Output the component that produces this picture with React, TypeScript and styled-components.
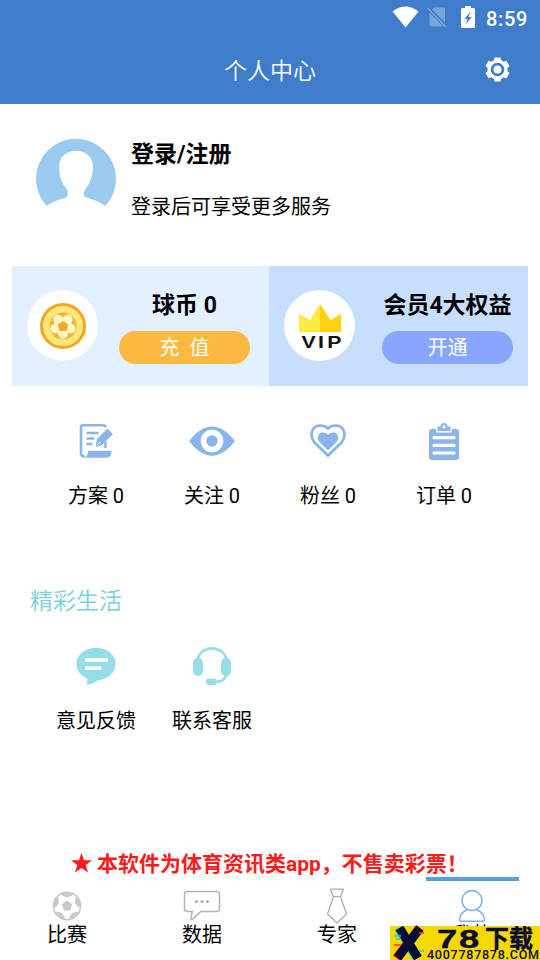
import React from 'react';
import styled, { createGlobalStyle } from 'styled-components';

const GlobalStyle = createGlobalStyle`
  * { box-sizing: border-box; }
  body { margin: 0; background: #fff; }
`;

const Screen = styled.div`
  width: 540px;
  height: 960px;
  overflow: hidden;
  display: flex;
  flex-direction: column;
  background: #fff;
  color: #000;
  font-family: Roboto, "Noto Sans CJK SC", sans-serif;
  font-size: 20px;
`;

const Header = styled.header`
  flex: none;
  height: 104px;
  background: #3f7dcb;
  color: #fff;
`;

const StatusBar = styled.div`
  height: 36px;
  padding-right: 12px;
  display: flex;
  align-items: center;
  justify-content: flex-end;
  gap: 8px;
  svg { display: block; margin-bottom: 2px; }
`;

const Clock = styled.span`
  width: 42px;
  margin-left: 3px;
  font-size: 20px;
  font-weight: 500;
  line-height: 36px;
  letter-spacing: 0.7px;
  white-space: nowrap;
  padding-top: 1px;
`;

const TitleBar = styled.div`
  height: 68px;
  padding: 0 30px;
  display: grid;
  grid-template-columns: 26px 1fr 26px;
  align-items: center;
`;

const Title = styled.h1`
  margin: 0;
  grid-column: 2;
  text-align: center;
  font-size: 23px;
  font-weight: 350;
  line-height: 30px;
  padding-top: 4px;
`;

const Profile = styled.section`
  flex: none;
  height: 162px;
  padding: 35px 36px 0;
  display: flex;
  gap: 15px;
`;

const ProfileText = styled.div`
  padding-top: 1px;
  display: flex;
  flex-direction: column;
  gap: 22px;
`;

const ProfileName = styled.div`
  font-size: 23px;
  font-weight: 700;
  line-height: 30px;
`;

const ProfileHint = styled.div`
  line-height: 30px;
`;

const Cards = styled.section`
  flex: none;
  height: 120px;
  margin: 0 12px;
  display: grid;
  grid-template-columns: 257px 259px;
`;

const Card = styled.div<{ $bg: string; $gap: number }>`
  padding: 24px 0 0 15px;
  display: flex;
  gap: ${(p) => p.$gap}px;
  background: ${(p) => p.$bg};
`;

const Medal = styled.div`
  width: 71px;
  height: 71px;
  border-radius: 50%;
  background: #fff;
  display: flex;
  align-items: center;
  justify-content: center;
`;

const CardBody = styled.div`
  width: 131px;
  display: flex;
  flex-direction: column;
  align-items: center;
`;

const CardTitle = styled.div`
  height: 41px;
  padding-top: 1px;
  font-size: 23px;
  font-weight: 700;
  line-height: 30px;
  white-space: nowrap;
`;

const Pill = styled.button<{ $bg: string }>`
  width: 131px;
  height: 33px;
  padding: 2px 0 0;
  border: 0;
  border-radius: 17px;
  background: ${(p) => p.$bg};
  color: #fff;
  font: inherit;
  line-height: 31px;
  white-space: pre;
`;

const ItemGrid = styled.section<{ $height: number }>`
  flex: none;
  height: ${(p) => p.$height}px;
  padding-left: 38px;
  display: grid;
  grid-template-columns: repeat(4, 116px);
`;

const Item = styled.div`
  display: flex;
  flex-direction: column;
  align-items: center;
`;

const ItemIcon = styled.div`
  height: 50px;
  display: flex;
  align-items: center;
`;

const ItemLabel = styled.div`
  margin-top: 15px;
  line-height: 30px;
  white-space: nowrap;
`;

const Spacer = styled.div<{ $h: number }>`
  flex: none;
  height: ${(p) => p.$h}px;
`;

const SectionTitle = styled.h2`
  flex: none;
  margin: 0 30px;
  height: 55px;
  padding-top: 1px;
  font-size: 23px;
  font-weight: 350;
  line-height: 30px;
  color: #7dcfdd;
`;

const Notice = styled.div`
  flex: none;
  height: 28px;
  padding-left: 71px;
  display: flex;
  align-items: center;
  gap: 5px;
  color: #fb1b1b;
  font-size: 21px;
  font-weight: 700;
  line-height: 28px;
  white-space: nowrap;
  svg { flex: none; display: block; }
  span { padding-top: 2px; }
`;

const Tabs = styled.nav`
  flex: none;
  height: 83px;
  position: relative;
  display: grid;
  grid-template-columns: repeat(4, 135px);
`;

const Tab = styled.div<{ $active?: boolean }>`
  display: flex;
  flex-direction: column;
  align-items: center;
  &::before {
    content: "";
    width: 93px;
    height: 4px;
    background: ${(p) => (p.$active ? '#589de0' : 'transparent')};
  }
`;

const TabIcon = styled.div`
  height: 38px;
  margin-top: 6px;
  padding-right: 2px;
  display: flex;
  align-items: center;
`;

const TabLabel = styled.div`
  line-height: 24px;
  margin-top: -2px;
  padding-right: 1px;
`;

const Watermark = styled.div`
  position: absolute;
  right: 0;
  bottom: 0;
  width: 150px;
  height: 34px;
  background: #f5d800;
  svg { display: block; overflow: visible; }
`;

const BLUE = '#8ab5eb';
const CYAN = '#96dce9';

const Wifi = () => (
  <svg width="27" height="22" viewBox="0 0 27 22">
    <path d="M.5 5.500Q13.500-4.500 26.500 5.500L13.500 21.500Z" fill="#fff" />
  </svg>
);

const NoSim = () => (
  <svg width="20" height="22" viewBox="0 0 20 22">
    <path d="M7 1.500h9.500q1.500 0 1.500 1.500v13.500L5 3.500ZM2.500 6.500l14 14H4q-1.500 0-1.500-1.500Z" fill="#79a4da" />
    <path d="M.7 2.200l18 18.500" stroke="#79a4da" strokeWidth="1.600" />
  </svg>
);

const Battery = () => (
  <svg width="20" height="22" viewBox="-6 0 20 22">
    <path d="M4 0h6v2h2.500q1.500 0 1.500 1.500v17q0 1.500-1.500 1.500h-11Q0 22 0 20.500v-17Q0 2 1.500 2H4Z" fill="#fff" />
    <path d="M9.500 5.500L3.500 13h3L5 18.500l5.500-7.500h-3Z" fill="#3f7dcb" />
  </svg>
);

const Gear = () => (
  <svg width="26" height="26" viewBox="0 0 26 26">
    <g fill="#fff">
      <circle cx="13.500" cy="12.500" r="10" />
      {[0, 60, 120].map((a) => (
        <path key={a} d="M9.700 4L10.500.4h6L17.300 4v17l-.8 3.600h-6L9.700 21Z" transform={`rotate(${a} 13.500 12.500)`} />
      ))}
    </g>
    <circle cx="13.500" cy="12.500" r="5.400" fill="none" stroke="#3f7dcb" strokeWidth="2.800" />
  </svg>
);

const Avatar = () => (
  <svg width="80" height="80" viewBox="0 0 80 80">
    <path
      d="M10.700 67A40 40 0 1 1 69.300 67C63 62 55 60 50 58.500C47 57 47.500 53 48.500 51.500C55 43 57 36 57 28C57 18 50 11.700 40 11.700S23 18 23 28C23 36 25 43 31 50.500C32.500 54 32 57.500 29 59C22 61 17 62.500 10.700 67Z"
      fill="#9acaee"
    />
  </svg>
);

const Coin = () => (
  <svg width="46" height="46" viewBox="0 0 46 46">
    <circle cx="23" cy="23" r="21.500" fill="#fee77a" stroke="#f5a51f" strokeWidth="3" />
    <circle cx="23" cy="23" r="13.500" fill="#f2b431" />
    <g fill="#fff6c2">
      {[36, 108, 180, 252, 324].map((a) => (
        <circle key={a} cx="23" cy="14.800" r="4.800" transform={`rotate(${a} 23 23)`} />
      ))}
      <circle cx="23" cy="23" r="9" />
    </g>
    <path d="M23 18l5.300 3.800-2 6.200h-6.600l-2-6.200Z" fill="#f2a927" />
  </svg>
);

const VipArt = styled.svg`
  display: block;
  overflow: visible;
`;

const Vip = () => (
  <VipArt width="50" height="46" viewBox="0 0 50 46">
    <path d="M4 11l11 6L25 1v28H4Z" fill="#ffe943" />
    <path d="M25 1l10.500 16L46 11v18H25Z" fill="#ffd111" />
    <text transform="translate(6.500 45) scale(1.250 1)" x="0 13.200 20.600" fontFamily="Liberation Sans, sans-serif" fontWeight="700" fontSize="17" fill="#111">VIP</text>
  </VipArt>
);

const Plan = () => (
  <svg width="36" height="36" viewBox="0 0 36 36" fill="none">
    <path d="M28 4Q27 2.200 25 2.200H5Q3 2.200 3 4.200V30q0 3.500 4 3.500" stroke={BLUE} strokeWidth="2.600" />
    <path d="M6 34.800q4-1 4-7h23.500q0 7-5 7H6Z" fill={BLUE} />
    <path d="M27.500 25v-6" stroke={BLUE} strokeWidth="2.600" />
    <path d="M8.500 10h12M8.500 15.500h8M8.500 21h6" stroke={BLUE} strokeWidth="2.400" />
    <path d="M19 16L29.500 5.500l5.500 5.500L24 22l-6.500 2Z" fill={BLUE} />
    <path d="M19 22l3.500-3.500" stroke="#fff" strokeWidth="1" />
  </svg>
);

const Eye = () => (
  <svg width="46" height="30" viewBox="0 0 46 30">
    <path d="M0 15C15-4.500 31-4.500 46 15C31 34.500 15 34.500 0 15Z" fill={BLUE} />
    <circle cx="23" cy="15" r="8.500" fill={BLUE} stroke="#fff" strokeWidth="5.500" />
  </svg>
);

const Fans = () => (
  <svg width="36" height="36" viewBox="0 0 36 36">
    <path d="M18 32.500L4.500 19.500C-1 13 1.500 3 9.500 2.700Q15 2.300 18 5.500Q21 2.300 26.500 2.700C34.500 3 37 13 31.500 19.500Z" fill="none" stroke={BLUE} strokeWidth="2.800" />
    <path d="M18 27.500L9 18.500C6 14.500 8.500 9.500 12.500 9.500Q16 9.500 18 11.500Q20 9.500 23.500 9.500C27.500 9.500 30 14.500 27 18.500Z" fill={BLUE} />
  </svg>
);

const Orders = () => (
  <svg width="30" height="37" viewBox="0 0 30 37">
    <rect y="6" width="30" height="31" rx="3" fill={BLUE} />
    <path d="M7 5v4.500h16V5Z" fill="#fff" />
    <path d="M8.500 3.500h2.800Q12 0 15 0t3.700 3.500h2.800V8h-13Z" fill={BLUE} />
    <circle cx="15" cy="3.800" r="1.600" fill="#fff" />
    <path d="M5 14.700h20M5 22.300h20M5 30h20" stroke="#fff" strokeWidth="3.200" strokeLinecap="round" />
  </svg>
);

const Feedback = () => (
  <svg width="40" height="37" viewBox="0 0 40 37">
    <ellipse cx="20" cy="16" rx="19.700" ry="16.200" fill={CYAN} />
    <path d="M10.500 29q2 4-.5 7.500Q17 36.500 23 31.500Z" fill={CYAN} />
    <path d="M9 12h23M9 20.300h16.500" stroke="#fff" strokeWidth="3.400" />
  </svg>
);

const Headset = () => (
  <svg width="38" height="38" viewBox="0 0 38 38">
    <path d="M4.500 13C7-2.500 31-2.500 33.500 13M33.500 27q-1.500 7.500-10 7.800" fill="none" stroke={CYAN} strokeWidth="2.700" />
    <rect y="11" width="10" height="18" rx="4.800" fill={CYAN} />
    <rect x="28" y="11" width="10" height="18" rx="4.800" fill={CYAN} />
    <rect x="12.800" y="31.500" width="11" height="6.500" rx="3.200" fill={CYAN} />
  </svg>
);

const Star = () => (
  <svg width="21" height="20" viewBox="0 0 21 20">
    <path d="M10.500 0l2.600 7.300H21l-6.300 4.800 2.400 7.500-6.600-4.500-6.600 4.500 2.400-7.500L0 7.300h7.900Z" fill="#fb1b1b" />
  </svg>
);

const BallIcon = () => (
  <svg width="30" height="30" viewBox="0 0 30 30">
    <circle cx="15" cy="15" r="13.600" fill="#fff" stroke="#c9c9cb" strokeWidth="1.700" />
    <path d="M15 9.500l5.200 3.800-2 6.100h-6.400l-2-6.100Z" fill="#c9c9cb" />
    <g fill="#c9c9cb">
      {[0, 72, 144, 216, 288].map((a) => (
        <path key={a} d="M9.500 2.500L15 1l5.500 1.500-.5 2L15 6.500l-5-2Z" transform={`rotate(${a} 15 15)`} />
      ))}
    </g>
  </svg>
);

const ChatIcon = () => (
  <svg width="38" height="32" viewBox="0 0 38 32">
    <path d="M4.500 1.500h29q3 0 3 3v14q0 3-3 3H18L9.500 29q-2 1-1.500-1.500l1.200-6H4.500q-3 0-3-3v-14q0-3 3-3Z" fill="none" stroke="#b2b2b5" strokeWidth="1.500" />
    <g fill="#aaa"><circle cx="13.500" cy="11.500" r="1.500" /><circle cx="19" cy="11.500" r="1.500" /><circle cx="24.500" cy="11.500" r="1.500" /></g>
  </svg>
);

const TieIcon = () => (
  <svg width="22" height="36" viewBox="0 0 22 36">
    <path d="M4.500 1.200h13l-3 7.500h-7ZM7.500 8.700L1.500 26l9.500 9 9.500-9-6-17.300" fill="none" stroke="#aeaeb1" strokeWidth="1.300" strokeLinejoin="round" />
  </svg>
);

const MeIcon = () => (
  <svg width="28" height="34" viewBox="0 0 28 34">
    <circle cx="14" cy="11.500" r="10" fill="none" stroke="#78b2e6" strokeWidth="1.400" />
    <path d="M9.500 20.500Q2 24 1.500 30.500q0 1.700 2 1.700h21q2 0 2-1.700Q26 24 18.500 20.500" fill="none" stroke="#78b2e6" strokeWidth="1.400" />
  </svg>
);

const WatermarkArt = () => (
  <svg width="150" height="34" viewBox="0 0 150 34">
    <g fill="none" strokeWidth="8">
      <path d="M8 2L26 32" stroke="#19d5dc" />
      <path d="M29 2L6 32" stroke="#ff2c55" />
      <path d="M9.500 2L28 32M30 2L7.500 32" stroke="#0b0c34" strokeWidth="9" />
    </g>
    <path d="M4 10h7M6 13h5M29 25h5" stroke="#19d5dc" strokeWidth="1.400" />
    <path d="M4 19h7M29 7h5" stroke="#ff2c55" strokeWidth="1.400" />
    <g fill="#0b0c34" fontWeight="700">
      <text transform="translate(47 21.700) scale(1.400 1)" fontFamily="Liberation Sans, sans-serif" fontSize="26" letterSpacing="1.200" stroke="#0b0c34" strokeWidth=".4">78</text>
      <text x="95" y="21.200" fontFamily="Noto Sans CJK SC, sans-serif" fontSize="24" stroke="#0b0c34" strokeWidth=".5">下载</text>
      <text x="37" y="33" fontFamily="Roboto, sans-serif" fontWeight="500" fontSize="12.500" textLength="112" lengthAdjust="spacing">4007787878.COM</text>
    </g>
  </svg>
);

const stats = [
  { label: '方案 0', icon: <Plan /> },
  { label: '关注 0', icon: <Eye /> },
  { label: '粉丝 0', icon: <Fans /> },
  { label: '订单 0', icon: <Orders /> },
];

const services = [
  { label: '意见反馈', icon: <Feedback /> },
  { label: '联系客服', icon: <Headset /> },
];

const tabs = [
  { label: '比赛', icon: <BallIcon /> },
  { label: '数据', icon: <ChatIcon /> },
  { label: '专家', icon: <TieIcon /> },
  { label: '我的', icon: <MeIcon />, active: true },
];

export default function App() {
  return (
    <Screen>
      <GlobalStyle />
      <Header>
        <StatusBar>
          <Wifi />
          <NoSim />
          <Battery />
          <Clock>8:59</Clock>
        </StatusBar>
        <TitleBar>
          <Title>个人中心</Title>
          <Gear />
        </TitleBar>
      </Header>
      <Profile>
        <Avatar />
        <ProfileText>
          <ProfileName>登录/注册</ProfileName>
          <ProfileHint>登录后可享受更多服务</ProfileHint>
        </ProfileText>
      </Profile>
      <Cards>
        <Card $bg="#e2f0ff" $gap={21}>
          <Medal><Coin /></Medal>
          <CardBody>
            <CardTitle>球币 0</CardTitle>
            <Pill $bg="#fcb93f">{'充  值'}</Pill>
          </CardBody>
        </Card>
        <Card $bg="#c8deff" $gap={27}>
          <Medal><Vip /></Medal>
          <CardBody>
            <CardTitle>会员4大权益</CardTitle>
            <Pill $bg="#88a5ff">开通</Pill>
          </CardBody>
        </Card>
      </Cards>
      <Spacer $h={30} />
      <ItemGrid $height={170}>
        {stats.map((s) => (
          <Item key={s.label}>
            <ItemIcon>{s.icon}</ItemIcon>
            <ItemLabel>{s.label}</ItemLabel>
          </Item>
        ))}
      </ItemGrid>
      <SectionTitle>精彩生活</SectionTitle>
      <ItemGrid $height={208}>
        {services.map((s) => (
          <Item key={s.label}>
            <ItemIcon>{s.icon}</ItemIcon>
            <ItemLabel>{s.label}</ItemLabel>
          </Item>
        ))}
      </ItemGrid>
      <Notice>
        <Star />
        <span>本软件为体育资讯类app，不售卖彩票！</span>
      </Notice>
      <Tabs>
        {tabs.map((t) => (
          <Tab key={t.label} $active={t.active}>
            <TabIcon>{t.icon}</TabIcon>
            <TabLabel>{t.label}</TabLabel>
          </Tab>
        ))}
        <Watermark>
          <WatermarkArt />
        </Watermark>
      </Tabs>
    </Screen>
  );
}
